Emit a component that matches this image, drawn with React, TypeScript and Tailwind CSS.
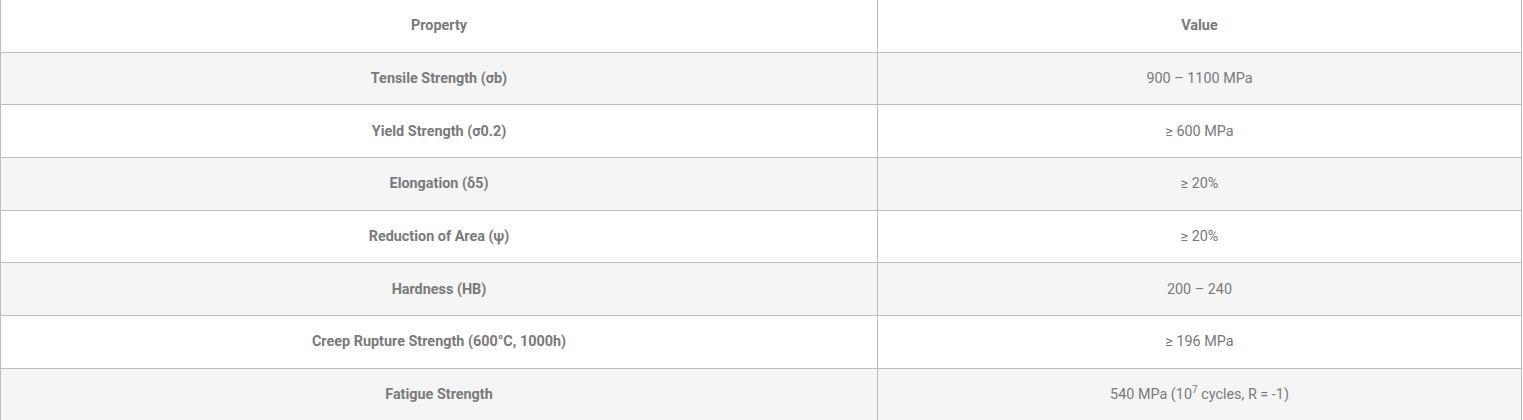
import React from "react";

const rows: [string, React.ReactNode][] = [
  ["Tensile Strength (σb)", "900 – 1100 MPa"],
  ["Yield Strength (σ0.2)", "≥ 600 MPa"],
  ["Elongation (δ5)", "≥ 20%"],
  ["Reduction of Area (ψ)", "≥ 20%"],
  ["Hardness (HB)", "200 – 240"],
  ["Creep Rupture Strength (600°C, 1000h)", "≥ 196 MPa"],
  ["Fatigue Strength", <>540 MPa (10<sup className="text-[10px] top-[-0.6em]">7</sup> cycles, R = -1)</>],
];

export default function App() {
  return (
    <div className="w-[1523px] h-[420px] overflow-hidden bg-white" style={{ fontFamily: "Roboto, 'Liberation Sans', sans-serif" }}>
      <div className="w-[1522px] border-l border-r border-[#bdbdbd] text-[14.4px] text-[#7a7a7a]">
        <div className="flex h-[52.6px] border-b border-[#bdbdbd] bg-white font-bold">
          <div className="w-[877px] border-r border-[#bdbdbd] flex items-center justify-center pt-px"><span>Property</span></div>
          <div className="flex-1 flex items-center justify-center pt-px"><span>Value</span></div>
        </div>
        {rows.map(([k, v], i) => (
          <div key={i} className={`flex h-[52.67px] border-b border-[#bdbdbd] ${i % 2 === 0 ? "bg-[#f5f5f5]" : "bg-white"}`}>
            <div className="w-[877px] border-r border-[#bdbdbd] flex items-center justify-center font-bold pt-px"><span>{k}</span></div>
            <div className="flex-1 flex items-center justify-center pt-px"><span>{v}</span></div>
          </div>
        ))}
      </div>
    </div>
  );
}
